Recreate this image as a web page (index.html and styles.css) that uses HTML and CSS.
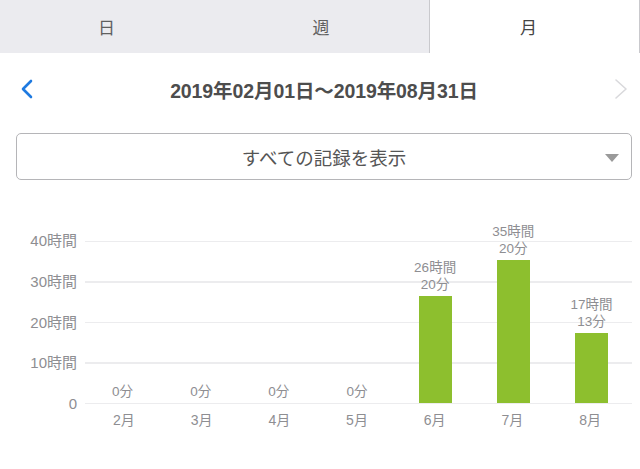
FILE: index.html
```html
<!DOCTYPE html>
<html lang="ja">
<head>
    <meta charset="UTF-8">
    <meta name="viewport" content="width=device-width, initial-scale=1.0">
    <title>記録</title>
    <link rel="stylesheet" href="styles.css">
</head>
<body>
    <div class="tabs">
        <div class="tab">日</div>
        <div class="tab">週</div>
        <div class="tab active">月</div>
    </div>

    <div class="period">
        <button class="arrow prev">
            <svg width="14" height="20" viewBox="0 0 14 20"><path d="M11 2 L3 10 L11 18" fill="none" stroke="#1f7ae0" stroke-width="2.6" stroke-linecap="round" stroke-linejoin="round"/></svg>
        </button>
        <div class="range">2019年02月01日〜2019年08月31日</div>
        <button class="arrow next">
            <svg width="14" height="22" viewBox="0 0 14 22"><path d="M2 2 L12 11 L2 20" fill="none" stroke="#d9d9dc" stroke-width="1.6" stroke-linecap="round" stroke-linejoin="round"/></svg>
        </button>
    </div>

    <div class="select">
        <span>すべての記録を表示</span>
        <span class="caret"></span>
    </div>

    <div class="chart">
        <div class="y-axis">
            <span>40時間</span>
            <span>30時間</span>
            <span>20時間</span>
            <span>10時間</span>
            <span>0</span>
        </div>
        <div class="plot" id="plot"></div>
        <div class="months" id="months"></div>
    </div>

    <script>
        // monthly totals in minutes
        const data = [
            { month: "2月", min: 0 },
            { month: "3月", min: 0 },
            { month: "4月", min: 0 },
            { month: "5月", min: 0 },
            { month: "6月", min: 26 * 60 + 20 },
            { month: "7月", min: 35 * 60 + 20 },
            { month: "8月", min: 17 * 60 + 13 }
        ];
        const pxPerHour = 4.05;

        const plot = document.getElementById("plot");
        const months = document.getElementById("months");

        data.forEach(d => {
            const col = document.createElement("div");
            col.className = "col";

            const h = Math.floor(d.min / 60);
            const m = d.min % 60;
            const label = document.createElement("div");
            label.className = "value";
            label.innerHTML = h > 0 ? `${h}時間<br>${m}分` : `${m}分`;
            col.appendChild(label);

            const bar = document.createElement("div");
            bar.className = "bar";
            bar.style.height = (d.min / 60 * pxPerHour) + "px";
            col.appendChild(bar);
            plot.appendChild(col);

            const ml = document.createElement("div");
            ml.textContent = d.month;
            months.appendChild(ml);
        });
    </script>
</body>
</html>
```

FILE: styles.css
```css
* {
    margin: 0;
    padding: 0;
    box-sizing: border-box;
}

body {
    font-family: 'Liberation Sans', 'Noto Sans CJK JP', sans-serif;
    background: #fff;
    color: #444;
    width: 640px;
    height: 469px;
    overflow: hidden;
}

/* top segment tabs */
.tabs {
    display: grid;
    grid-template-columns: 213px 216px 1fr;
    height: 53px;
    background-color: #ebebef;
}

.tab {
    display: flex;
    justify-content: center;
    align-items: center;
    font-size: 17px;
    color: #5f5f5f;
}

.tab.active {
    background-color: #fff;
    color: #444;
    border-left: 1px solid #c9c9cd;
    border-right: 1px solid #c9c9cd;
    padding-right: 12px;
}

/* date range row */
.period {
    height: 72px;
    display: flex;
    align-items: center;
    justify-content: space-between;
    padding: 0 12px 0 20px;
}

.arrow {
    background: none;
    border: none;
    display: flex;
    align-items: center;
}

.range {
    font-size: 19.5px;
    font-weight: bold;
    color: #4d4d4d;
    letter-spacing: -0.1px;
}

/* filter dropdown */
.select {
    position: relative;
    margin: 8px 8px 0 16px;
    height: 47px;
    border: 1px solid #b5b5b8;
    border-radius: 5px;
    display: flex;
    justify-content: center;
    align-items: center;
    font-size: 18.5px;
    color: #555;
}

.caret {
    position: absolute;
    right: 12px;
    top: 20px;
    width: 0;
    height: 0;
    border-left: 7px solid transparent;
    border-right: 7px solid transparent;
    border-top: 8px solid #9a9a9a;
}

/* bar chart */
.chart {
    display: grid;
    grid-template-columns: 77px 1fr;
    column-gap: 8px;
    margin: 52px 8px 0 0;
}

.y-axis {
    height: 181px;
    display: flex;
    flex-direction: column;
    justify-content: space-between;
    align-items: flex-end;
    font-size: 15px;
    line-height: 18px;
    color: #8e8e92;
}

.plot {
    align-self: start;
    margin-top: 9px;
    height: 163px;
    display: grid;
    grid-template-columns: repeat(7, 1fr);
    grid-template-rows: minmax(0, 1fr);
    background-image: repeating-linear-gradient(to bottom, #ececee 0, #ececee 1px, transparent 1px, transparent 40.5px);
}

.col {
    min-height: 0;
    display: flex;
    flex-direction: column;
    justify-content: flex-end;
    align-items: center;
    padding-bottom: 1px;
    padding-right: 3px;
}

.value {
    flex-shrink: 0;
    font-size: 13.5px;
    line-height: 17px;
    color: #8e8e92;
    text-align: center;
    margin-bottom: 3px;
}

.bar {
    flex-shrink: 0;
    width: 33px;
    background-color: #8dbf2e;
}

.months {
    grid-column: 2;
    display: grid;
    grid-template-columns: repeat(7, 1fr);
    padding-right: 3px;
    margin-top: -2px;
    font-size: 14px;
    line-height: 18px;
    color: #8e8e92;
    text-align: center;
}
```
